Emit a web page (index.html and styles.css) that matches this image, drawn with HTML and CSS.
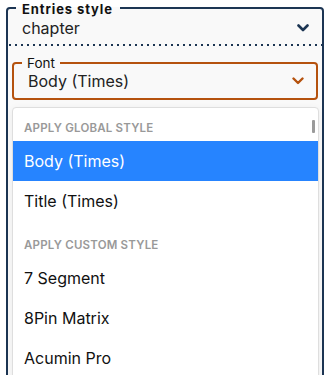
FILE: index.html
```html
<!DOCTYPE html>
<html lang="en">
<head>
    <meta charset="UTF-8">
    <meta name="viewport" content="width=device-width, initial-scale=1.0">
    <title>Entries style</title>
    <link rel="stylesheet" href="styles.css">
</head>
<body>
    <fieldset class="panel">
        <legend class="panel-legend">Entries style</legend>

        <div class="entries-row">
            <span class="entries-value">chapter</span>
            <svg class="chevron" width="12" height="8" viewBox="0 0 12 8">
                <path d="M1.5 1.5 L6 6 L10.5 1.5" fill="none" stroke="currentColor" stroke-width="2.6" stroke-linecap="round" stroke-linejoin="round"/>
            </svg>
        </div>

        <div class="font-field">
            <fieldset class="font-select">
                <legend class="font-legend">Font</legend>
                <div class="font-row">
                    <span class="font-value">Body (Times)</span>
                    <svg class="chevron chevron-orange" width="12" height="8" viewBox="0 0 12 8">
                        <path d="M1.5 1.5 L6 6 L10.5 1.5" fill="none" stroke="currentColor" stroke-width="2.4" stroke-linecap="round" stroke-linejoin="round"/>
                    </svg>
                </div>
            </fieldset>

            <div class="menu">
                <div class="menu-scroll"></div>
                <div class="menu-group">
                    <div class="group-heading">Apply global style</div>
                    <div class="option selected">Body (Times)</div>
                    <div class="option">Title (Times)</div>
                </div>
                <div class="menu-group">
                    <div class="group-heading">Apply custom style</div>
                    <div class="option">7 Segment</div>
                    <div class="option">8Pin Matrix</div>
                    <div class="option">Acumin Pro</div>
                </div>
            </div>
        </div>
    </fieldset>
</body>
</html>
```

FILE: styles.css
```css
:root {
    --navy: #1c3553;
    --orange: #b5520e;
    --panel-bg: #f9f9f9;
    --text: #1a1a1a;
    --muted: #999999;
    --blue: #2684ff;
}

* {
    margin: 0;
    padding: 0;
    box-sizing: border-box;
}

html, body {
    height: 100%;
    overflow: hidden;
}

body {
    font-family: 'Inter', 'Noto Sans', sans-serif;
    background: #ffffff;
    color: var(--text);
}

.panel {
    margin: 0 3px 0 6px;
    border: 2px solid var(--navy);
    border-radius: 4px;
    background: var(--panel-bg);
    min-height: 420px;
}

.panel-legend {
    margin-left: 8px;
    padding: 3px 7px 0 6px;
    font-size: 13px;
    font-weight: 700;
    line-height: 13px;
    letter-spacing: 0.9px;
    color: #111;
}

.entries-row {
    display: flex;
    align-items: center;
    justify-content: space-between;
    padding: 2px 13px 6px 14px;
    line-height: 20px;
    font-size: 16px;
    color: #222;
}

.chevron {
    display: block;
    color: var(--navy);
}

.chevron-orange {
    color: var(--orange);
}

.font-field {
    position: relative;
    padding-top: 11px;
    background-image: repeating-linear-gradient(to right, var(--navy) 0 2px, transparent 2px 6px);
    background-size: 100% 2px;
    background-repeat: no-repeat;
    background-position: 1px 0;
}

.font-select {
    margin: 0 4px;
    border: 2px solid var(--orange);
    border-radius: 4px;
}

.font-legend {
    margin-left: 8px;
    padding: 1px 5px 0;
    font-size: 13.5px;
    line-height: 14px;
    color: #111;
}

.font-row {
    display: flex;
    align-items: center;
    justify-content: space-between;
    padding: 1px 12px 7px 14px;
    font-size: 16px;
    line-height: 20px;
    color: #222;
}

.menu {
    position: absolute;
    top: calc(100% + 7px);
    left: 4px;
    right: 3px;
    background: #ffffff;
    border: 1px solid #dedede;
    border-radius: 4px;
    box-shadow: 0 2px 8px rgba(0, 0, 0, 0.06);
    padding: 4px 0;
}

.menu-scroll {
    position: absolute;
    top: 12px;
    right: 3px;
    width: 3px;
    height: 13px;
    background: #9a9a9a;
    border-radius: 1px;
}

.menu-group {
    padding: 8px 0;
}

.group-heading {
    padding: 0 11px;
    margin-bottom: 5px;
    font-size: 11.5px;
    line-height: 16px;
    font-weight: 600;
    letter-spacing: 0.2px;
    text-transform: uppercase;
    color: var(--muted);
}

.option {
    padding: 10px 11px;
    font-size: 16px;
    line-height: 20px;
    color: #111;
}

.option.selected {
    background: var(--blue);
    color: #ffffff;
}
```
